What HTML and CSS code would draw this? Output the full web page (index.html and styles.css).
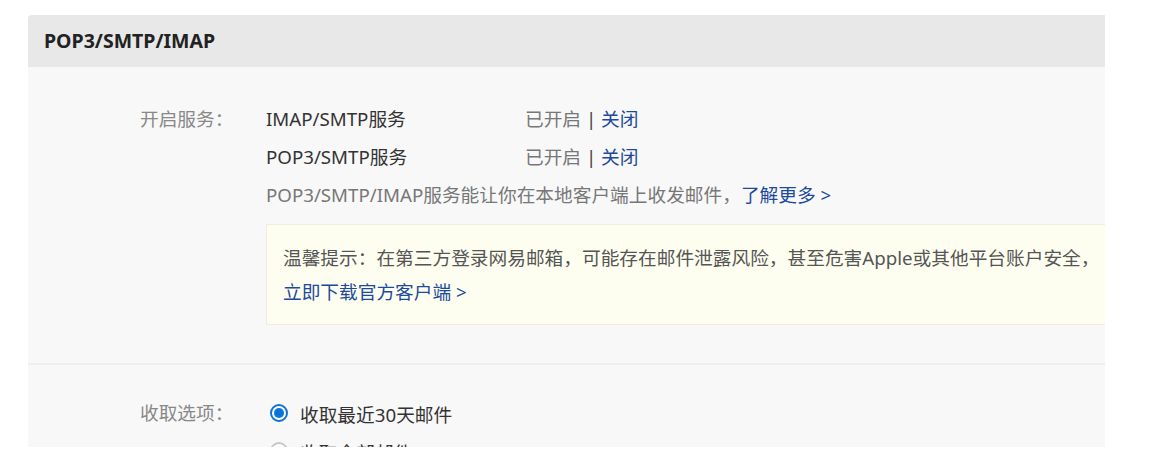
FILE: index.html
```html
<!doctype html>
<html>
<head>
    <meta http-equiv="Content-Type" content="text/html; charset=UTF-8" />
    <title>POP3/SMTP/IMAP</title>
    <link rel="stylesheet" href="styles.css">
</head>
<body>

    <div class="panel">
        <div class="panel_head">POP3/SMTP/IMAP</div>

        <div class="section">
            <div class="form_row">
                <span class="field_name">开启服务：</span>
                <div class="field_body">
                    <div class="service_row">
                        <span class="service_name">IMAP/SMTP服务</span>
                        <span class="service_state">已开启 <span class="sep">|</span> <a class="link" href="#">关闭</a></span>
                    </div>
                    <div class="service_row">
                        <span class="service_name">POP3/SMTP服务</span>
                        <span class="service_state">已开启 <span class="sep">|</span> <a class="link" href="#">关闭</a></span>
                    </div>
                    <div class="service_row hint">
                        POP3/SMTP/IMAP服务能让你在本地客户端上收发邮件，<a class="link" href="#">了解更多 &gt;</a>
                    </div>
                    <div class="tip_box">
                        温馨提示：在第三方登录网易邮箱，可能存在邮件泄露风险，甚至危害Apple或其他平台账户安全，<br>
                        <a class="link" href="#">立即下载官方客户端 &gt;</a>
                    </div>
                </div>
            </div>
        </div>

        <div class="section section_next">
            <div class="form_row">
                <span class="field_name">收取选项：</span>
                <div class="field_body">
                    <label class="radio_row"><span class="radio checked"></span>收取最近30天邮件</label>
                    <label class="radio_row"><span class="radio"></span>收取全部邮件</label>
                </div>
            </div>
        </div>
    </div>

</body>
</html>
```

FILE: styles.css
```css
body {
    margin: 0;
    background: #FFFFFF;
    font-family: "Noto Sans", "Noto Sans CJK SC", sans-serif;
    font-size: 18.7px;
    color: #333333;
}
.panel {
    margin: 15px 0 0 28px;
    width: 1077px;
    height: 432px;
    background: #F8F8F8;
    border-radius: 4px 0 0 0;
    overflow: hidden;
}
.panel_head {
    height: 52px;
    line-height: 52px;
    padding-left: 16px;
    background: #E8E8E8;
    font-weight: bold;
    font-size: 19.5px;
    color: #222222;
}
.section {
    padding: 33px 0 38px 112px;
}
.section_next {
    border-top: 2px solid #EEEEEE;
    padding-top: 29px;
}
.form_row {
    display: flex;
}
.field_name {
    width: 126px;
    flex-shrink: 0;
    line-height: 38px;
    color: #888888;
}
.field_body {
    flex: 1;
}
.service_row {
    display: flex;
    line-height: 38px;
    white-space: nowrap;
}
.service_name {
    width: 259px;
}
.service_state {
    color: #777777;
}
.sep {
    color: #444444;
}
.link {
    color: #1C4A9C;
    text-decoration: none;
}
.hint {
    color: #777777;
}
.tip_box {
    margin-top: 10px;
    width: 900px;
    padding: 16px 16px 15px 16px;
    line-height: 34px;
    background: #FEFEF0;
    border: 1px solid #F0EEDA;
    color: #555555;
    white-space: nowrap;
}
.radio_row {
    display: flex;
    align-items: center;
    gap: 12px;
    height: 38px;
    padding-left: 4px;
    color: #333333;
}
.radio {
    width: 14px;
    height: 14px;
    border: 2px solid #C8C8C8;
    border-radius: 50%;
    background: #FFFFFF;
    position: relative;
}
.radio.checked {
    border-color: #0A74DA;
}
.radio.checked::after {
    content: "";
    position: absolute;
    left: 2px;
    top: 2px;
    width: 10px;
    height: 10px;
    border-radius: 50%;
    background: #0A74DA;
}
```
